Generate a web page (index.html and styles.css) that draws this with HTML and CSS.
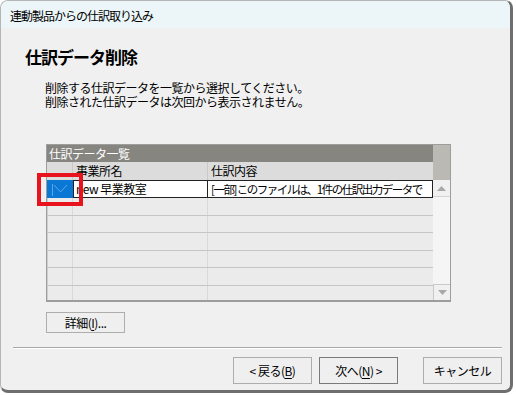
FILE: index.html
```html
<!DOCTYPE html>
<html lang="ja">
<head>
  <meta charset="UTF-8">
  <title>連動製品からの仕訳取り込み</title>
  <link rel="stylesheet" href="styles.css">
</head>
<body>

  <div class="window">
    <div class="titlebar">連動製品からの仕訳取り込み</div>

    <div class="main">
      <h1>仕訳データ削除</h1>

      <div class="desc">
        <div>削除する仕訳データを一覧から選択してください。</div>
        <div>削除された仕訳データは次回から表示されません。</div>
      </div>

      <div class="grid">
        <div class="table">
          <div class="caption">仕訳データ一覧</div>
          <div class="row head">
            <div class="cell rowhead"></div>
            <div class="cell name">事業所名</div>
            <div class="cell body">仕訳内容</div>
          </div>
          <div class="row data">
            <div class="cell rowhead selected">
              <svg width="26" height="17" viewBox="0 0 26 17">
                <path d="M5.5 4v12" stroke="#5aa8ea" stroke-width="1" fill="none"/>
                <path d="M7 5l6.5 7 6.5-7" stroke="#5aa8ea" stroke-width="1" fill="none"/>
              </svg>
            </div>
            <div class="cell name">new 早業教室</div>
            <div class="cell body">[一部]&nbsp;このファイルは、1件の仕訳出力データで</div>
          </div>
          <div class="row empty"><div class="cell rowhead"></div><div class="cell name"></div><div class="cell body"></div></div>
          <div class="row empty"><div class="cell rowhead"></div><div class="cell name"></div><div class="cell body"></div></div>
          <div class="row empty"><div class="cell rowhead"></div><div class="cell name"></div><div class="cell body"></div></div>
          <div class="row empty"><div class="cell rowhead"></div><div class="cell name"></div><div class="cell body"></div></div>
          <div class="row empty"><div class="cell rowhead"></div><div class="cell name"></div><div class="cell body"></div></div>
          <div class="row empty last"><div class="cell rowhead"></div><div class="cell name"></div><div class="cell body"></div></div>
        </div>

        <div class="scrollbar">
          <div class="corner"></div>
          <div class="arrow up">
            <svg width="9" height="5" viewBox="0 0 9 5"><path d="M0 5L4.5 0 9 5z" fill="#a8a8a8"/></svg>
          </div>
          <div class="track"></div>
          <div class="arrow down">
            <svg width="9" height="5" viewBox="0 0 9 5"><path d="M0 0L4.5 5 9 0z" fill="#a8a8a8"/></svg>
          </div>
        </div>

        <div class="mark"></div>
      </div>

      <button class="btn detail">詳細(<u>I</u>)...</button>

      <div class="separator"></div>

      <div class="actions">
        <button class="btn">&lt; 戻る(<u>B</u>)</button>
        <button class="btn default">次へ(<u>N</u>) &gt;</button>
        <button class="btn cancel">キャンセル</button>
      </div>
    </div>
  </div>

</body>
</html>
```

FILE: styles.css
```css
body {
  margin: 0;
  background: #ffffff;
  font-family: "Noto Sans CJK JP", "Noto Sans", sans-serif;
  color: #000;
}

.window {
  width: 509px;
  height: 389px;
  background: #f0f0f0;
  border: 1px solid #b5b5b5;
  border-right: 3px solid #6e6e6e;
  border-bottom: 3px solid #6e6e6e;
  border-radius: 8px;
  overflow: hidden;
  display: flex;
  flex-direction: column;
}

.titlebar {
  height: 27px;
  background: #ecf6f9;
  font-size: 12px;
  line-height: 29px;
  letter-spacing: -1px;
  padding-left: 9px;
}

.main {
  display: flex;
  flex-direction: column;
  align-items: flex-start;
}

h1 {
  margin: 18px 0 0 24px;
  font-size: 17px;
  line-height: 22px;
  font-weight: bold;
  letter-spacing: -1px;
}

.desc {
  margin: 13px 0 0 44px;
  font-size: 12px;
  line-height: 14px;
  letter-spacing: -0.5px;
}

.grid {
  position: relative;
  margin: 35px 0 0 45px;
  display: flex;
  width: 403px;
  height: 155px;
  border: 1px solid #9d9d9d;
  border-bottom-width: 2px;
  box-shadow: inset 1px 0 #cfcfcf;
  background: #ebebeb;
}

.table {
  width: 386px;
  display: flex;
  flex-direction: column;
  overflow: hidden;
}

.caption {
  height: 17px;
  flex-shrink: 0;
  background: #86857f;
  color: #fff;
  font-size: 12px;
  line-height: 17px;
  padding-left: 2px;
  letter-spacing: -0.5px;
}

.row {
  display: flex;
  flex-shrink: 0;
  font-size: 12px;
  letter-spacing: -0.5px;
}

.cell {
  box-sizing: border-box;
  padding-left: 3px;
  white-space: nowrap;
  overflow: hidden;
}

.rowhead {
  width: 26px;
  padding: 0;
}

.name {
  width: 135px;
}

.body {
  flex: 1;
}

.head {
  height: 18px;
  line-height: 18px;
  background: #dcdcdc;
}

.head .cell {
  border-right: 1px solid #c9c9c9;
}

.head .body {
  border-right: none;
}

.data {
  height: 18px;
  line-height: 16px;
}

.data .name,
.data .body {
  background: #fff;
  border-top: 1px solid #222;
  border-bottom: 1px solid #222;
  border-right: 1px solid #222;
}

.data .name {
  border-left: 1px solid #222;
  padding-left: 2px;
}

.data .body {
  font-size: 11.5px;
  letter-spacing: -1.5px;
}

.rowhead.selected {
  background: #0b77d5;
  line-height: 0;
}

.empty {
  height: 17.5px;
  border-bottom: 1px solid #c5c5c5;
  box-sizing: border-box;
}

.empty .rowhead,
.empty .name {
  border-right: 1px solid #d9d9d9;
}

.empty.last {
  border-bottom: none;
}

.scrollbar {
  width: 17px;
  display: flex;
  flex-direction: column;
  background: #f5f5f5;
}

.corner {
  height: 35px;
  background: #bab9b3;
}

.arrow {
  height: 17px;
  display: flex;
  align-items: center;
  justify-content: center;
  background: #f0f0f0;
}

.arrow.up {
  border-bottom: 1px solid #d4d4d4;
  box-sizing: border-box;
}

.arrow.down {
  height: 16px;
  border-top: 1px solid #c9c9c9;
  border-left: 1px solid #c9c9c9;
  box-sizing: border-box;
}

.track {
  flex: 1;
}

.mark {
  position: absolute;
  left: -10px;
  top: 28px;
  width: 46px;
  height: 33px;
  box-sizing: border-box;
  border: 4px solid #e9131d;
}

.btn {
  font-family: "Noto Sans CJK JP", "Noto Sans", sans-serif;
  font-size: 12px;
  letter-spacing: -0.5px;
  background: #efefef;
  border: 1px solid #adadad;
  border-radius: 0;
  padding: 0;
  color: #000;
  width: 79px;
  height: 27px;
}

.btn u {
  text-underline-offset: 2px;
}

.detail {
  margin: 10px 0 0 45px;
  height: 21px;
  line-height: 19px;
}

.separator {
  margin: 14px 0 0 12px;
  width: 489px;
  border-top: 1px solid #a9a9a9;
  border-bottom: 1px solid #ffffff;
}

.actions {
  align-self: stretch;
  display: flex;
  justify-content: flex-end;
  gap: 7px;
  margin-top: 8px;
  padding-right: 8px;
}

.default {
  border-color: #7a7a7a;
}

.cancel {
  margin-left: 18px;
}
```
